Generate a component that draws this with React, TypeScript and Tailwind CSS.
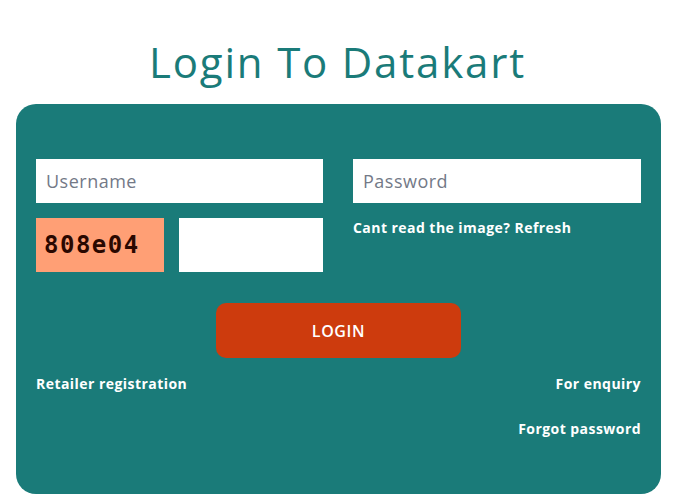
export default function App() {
  return (
    <div className="w-[675px] h-[503px] bg-white font-['Open_Sans',sans-serif] overflow-hidden">
      <h1 className="mt-[37px] h-[50px] text-center text-[42px] leading-[50px] font-normal text-[#1a7b79] tracking-[1.8px]">
        Login To Datakart
      </h1>
      <div className="ml-[16px] w-[645px] mt-[17px] h-[390px] rounded-[20px] bg-[#1a7b79] px-[20px] pt-[55px]">
        <div className="grid grid-cols-[287px_288px] gap-x-[30px]">
          <div>
            <input
              className="block w-full h-[44px] bg-white px-[10px] text-[18px] tracking-[0.5px] text-[#444] placeholder:text-[#737987] outline-none"
              placeholder="Username"
            />
            <div className="mt-[15px] flex gap-[15px]">
              <div className="w-[128px] h-[54px] bg-[#ff9f75] flex items-center pl-[8px]">
                <span className="font-['DejaVu_Sans_Mono',monospace] font-bold text-[24px] text-[#2a0800] tracking-[1.5px]">
                  808e04
                </span>
              </div>
              <input className="block flex-1 min-w-0 h-[54px] bg-white px-[10px] outline-none" />
            </div>
          </div>
          <div>
            <input
              type="password"
              className="block w-full h-[44px] bg-white px-[10px] text-[18px] tracking-[0.5px] text-[#444] placeholder:text-[#737987] outline-none"
              placeholder="Password"
            />
            <div className="mt-[15px] text-[14px] leading-[20px] font-bold tracking-[0.45px] text-white">
              Cant read the image? Refresh
            </div>
          </div>
        </div>
        <div className="mt-[31px] flex justify-center">
          <button className="w-[245px] h-[55px] rounded-[10px] bg-[#cd3b0d] text-white text-[16px] font-semibold tracking-[0.6px]">
            LOGIN
          </button>
        </div>
        <div className="mt-[16px] flex justify-between text-[14px] leading-[20px] font-bold tracking-[0.45px] text-white">
          <span>Retailer registration</span>
          <span>For enquiry</span>
        </div>
        <div className="mt-[25px] flex justify-end text-[14px] leading-[20px] font-bold tracking-[0.45px] text-white">
          <span>Forgot password</span>
        </div>
      </div>
    </div>
  );
}
